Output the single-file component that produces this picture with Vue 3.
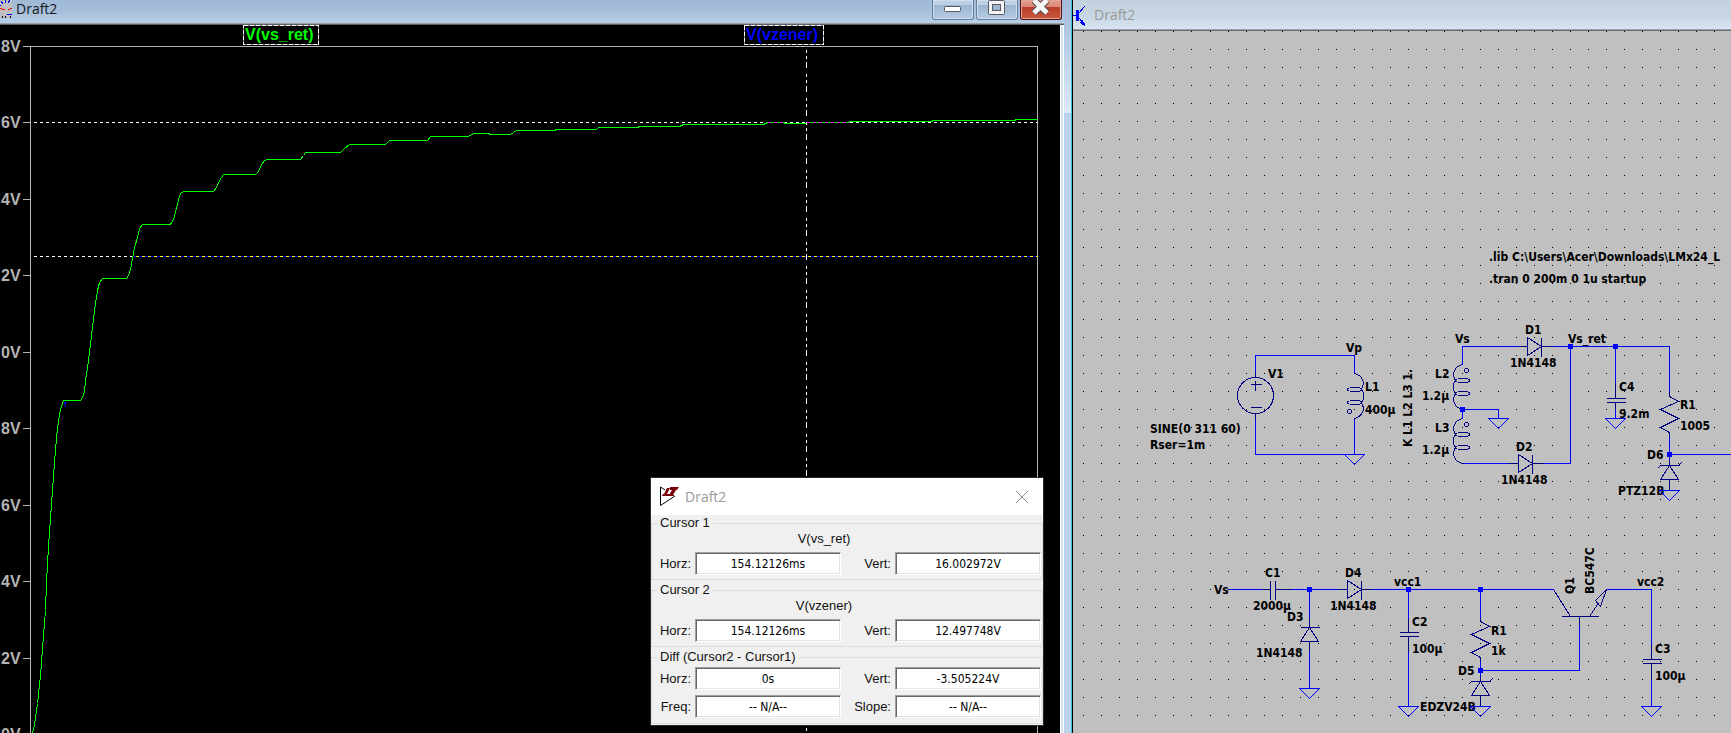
<script setup>
import { ref } from 'vue'

const ticks = [
  { y: 46, t: '8V' }, { y: 122, t: '6V' }, { y: 199, t: '4V' }, { y: 275, t: '2V' }, { y: 352, t: '0V' },
  { y: 428, t: '8V' }, { y: 505, t: '6V' }, { y: 581, t: '4V' }, { y: 658, t: '2V' }, { y: 734, t: '0V' },
]

const trace =
  '32,733 34,724 37,703 40,675 43,635 45,610 46,582 48,546 50,518 52,490 54,462 56,437 58,420 60,409 63,400 ' +
  '80,400 82,397 84,391 85,380 87,367 89,352 91,335 93,318 95,303 97,290 99,282 102,278 126,278 128,275 130,269 ' +
  '132,258 134,247 137,237 139,228 142,224 170,224 173,219 176,208 178,199 180,193 183,191 213,191 216,187 219,180 ' +
  '223,174 255,174 258,171 261,164 264,160 267,159 300,159 303,155 305,152 340,152 344,148 349,144 385,144 389,140 ' +
  '427,140 430,136 468,136 473,133 489,133 489,134 510,134 516,130 555,130 555,129 596,129 598,127 638,127 638,126 ' +
  '679,126 683,124 763,124 767,122 784,122 784,123 806,123 806,122 849,122 849,121 932,121 932,120 1015,120 1015,119 1037,119'

const groups = ref([
  { title: 'Cursor 1', signal: 'V(vs_ret)', rows: [[['Horz:', '154.12126ms'], ['Vert:', '16.002972V']]] },
  { title: 'Cursor 2', signal: 'V(vzener)', rows: [[['Horz:', '154.12126ms'], ['Vert:', '12.497748V']]] },
  {
    title: 'Diff (Cursor2 - Cursor1)', signal: '',
    rows: [[['Horz:', '0s'], ['Vert:', '-3.505224V']], [['Freq:', '-- N/A--'], ['Slope:', '-- N/A--']]],
  },
])

const wires = [
  'M1255 372V355H1354V373', 'M1255 418V454H1354V418',
  'M1462 364V346H1518', 'M1552 346H1669V391', 'M1570 346V463H1543', 'M1462 463H1508',
  'M1462 418V409H1498V418', 'M1615 346V382', 'M1615 409V418', 'M1669 436V459', 'M1669 454H1731',
  'M1228 589H1261', 'M1291 589H1337', 'M1372 589H1553', 'M1309 589V617', 'M1309 651V688',
  'M1408 589V618', 'M1408 651V706', 'M1480 589V617', 'M1480 661V675', 'M1480 670H1579V625',
  'M1606 589H1651V644', 'M1651 679V706',
]
const pins = [
  'M1255 372V377', 'M1255 413V418', 'M1250 384H1261', 'M1255 380V390', 'M1250 407H1261',
  'M1518 346H1527', 'M1541 346H1552', 'M1508 463H1518', 'M1532 463H1543',
  'M1615 382V398', 'M1606 398H1625', 'M1606 402H1625', 'M1615 402V409',
  'M1669 391V396L1678 401L1660 409L1678 418L1660 427L1669 432V436',
  'M1669 459V465', 'M1669 479V490',
  'M1261 589H1270', 'M1270 580V599', 'M1275 580V599', 'M1275 589H1291',
  'M1337 589H1347', 'M1361 589H1372', 'M1309 617V627', 'M1309 641V651',
  'M1408 618V632', 'M1399 632H1418', 'M1399 636H1418', 'M1408 636V651',
  'M1480 617V621L1489 626L1471 634L1489 643L1471 652L1480 657V661',
  'M1480 675V681', 'M1480 695V706',
  'M1579 625V616', 'M1561 616H1598', 'M1553 589L1570 616', 'M1589 616L1597 604', 'M1606 589L1595 600L1600 606Z',
  'M1651 644V659', 'M1642 659H1661', 'M1642 663H1661', 'M1651 663V679',
]
const grounds = [[1354, 454], [1498, 418], [1615, 418], [1669, 490], [1309, 688], [1408, 706], [1480, 706], [1651, 706]]
const joints = [[1570, 346], [1615, 346], [1462, 409], [1669, 454], [1309, 589], [1408, 589], [1480, 589], [1480, 670]]
const diodes = [[1527, 346], [1518, 463], [1347, 589]]
const upDiodes = [{ x: 1309, y: 627 }, { x: 1669, y: 465, zener: true }, { x: 1480, y: 681, zener: true }]
const coils = [
  { x: 1354, y: 373, side: 1, dx: 1349, dy: 411 },
  { x: 1462, y: 364, side: -1, dx: 1466, dy: 370 },
  { x: 1462, y: 418, side: -1, dx: 1466, dy: 424 },
]
const labels = [
  [1489, 261, '.lib C:\\Users\\Acer\\Downloads\\LMx24_L'], [1489, 283, '.tran 0 200m 0 1u startup'],
  [1346, 352, 'Vp'], [1268, 378, 'V1'], [1365, 391, 'L1'], [1365, 414, '400µ'],
  [1150, 433, 'SINE(0 311 60)'], [1150, 449, 'Rser=1m'],
  [1435, 378, 'L2'], [1422, 400, '1.2µ'], [1435, 432, 'L3'], [1422, 454, '1.2µ'],
  [1455, 343, 'Vs'], [1525, 334, 'D1'], [1510, 367, '1N4148'], [1568, 343, 'Vs_ret'],
  [1619, 391, 'C4'], [1619, 418, '9.2m'], [1680, 409, 'R1'], [1680, 430, '1005'],
  [1516, 451, 'D2'], [1501, 484, '1N4148'], [1647, 459, 'D6'], [1618, 495, 'PTZ12B'],
  [1265, 577, 'C1'], [1253, 610, '2000µ'], [1345, 577, 'D4'], [1330, 610, '1N4148'],
  [1287, 621, 'D3'], [1256, 657, '1N4148'], [1214, 594, 'Vs'], [1394, 586, 'vcc1'],
  [1412, 626, 'C2'], [1412, 653, '100µ'], [1491, 635, 'R1'], [1491, 655, '1k'],
  [1458, 675, 'D5'], [1420, 711, 'EDZV24B'], [1637, 586, 'vcc2'], [1655, 653, 'C3'], [1655, 680, '100µ'],
]
const upright = [[1412, 447, 'K L1 L2 L3 1.'], [1574, 594, 'Q1'], [1594, 594, 'BC547C']]
</script>

<template>
  <main class="desk">
    <section class="wave">
      <div class="wave-main">
        <header class="bar">
          <svg class="wave-icon" width="12" height="18" viewBox="0 0 12 18" shape-rendering="crispEdges">
            <path fill="#c0c0c0" d="M0 0H12V18H0Z" />
            <path fill="none" stroke="#00f" d="M1 1l2 3M5 0l1 3M10 0l-2 3M0 5l1 1M7 14.500h5" />
            <path fill="none" stroke="#e00" d="M0 8.500h2M2 9.500h3M8 9.500h2M10 8.500h2" />
            <path fill="none" stroke="#000" d="M2.500 16v2M5.500 16v2M10.500 16v2" />
          </svg>
          <h1 class="title">Draft2</h1>
          <div class="controls">
            <button type="button" class="ctl" aria-label="Minimize">
              <svg width="40" height="19" viewBox="0 0 40 19"><rect x="11.500" y="6.500" width="16" height="5" rx="1" fill="#fff" stroke="#555a66" /></svg>
            </button>
            <button type="button" class="ctl" aria-label="Maximize">
              <svg width="40" height="19" viewBox="0 0 40 19">
                <rect x="11.500" y="0.500" width="16" height="14" rx="1" fill="#f4f4f4" stroke="#555a66" />
                <rect x="15.500" y="4.500" width="8" height="6" fill="#9db6d2" stroke="#555a66" />
              </svg>
            </button>
            <button type="button" class="ctl close" aria-label="Close">
              <svg width="40" height="19" viewBox="0 0 40 19">
                <path d="M13 0L26 13M26 0L13 13" stroke="#51444f" stroke-width="7" />
                <path d="M13 0L26 13M26 0L13 13" stroke="#f6f6f6" stroke-width="5" />
              </svg>
            </button>
          </div>
        </header>
        <div class="plot">
          <svg class="canvas" viewBox="0 25 1060 708" preserveAspectRatio="xMinYMin slice">
            <g shape-rendering="crispEdges" fill="none" transform="translate(0.5 0.5)">
              <path stroke="#b4b4b4" d="M30 733V46H1037V733" />
              <path v-for="k in ticks" :key="k.y" stroke="#b4b4b4" :d="`M22 ${k.y}H30`" />
              <path stroke="#fff" stroke-dasharray="3 3" d="M33 122H1037M33 256H133" />
              <path stroke="#00f" d="M133 256H1037M64 401V403M65 401V406" />
              <path stroke="#ff0" stroke-dasharray="3 3" d="M135 256H1037" />
              <polyline stroke="#0f0" :points="trace" />
              <path stroke="#f0f" stroke-dasharray="3 3" d="M767 122H784M806 122H849" />
              <path stroke="#fff" stroke-dasharray="3 3 3 3 6 6" d="M806 49V733" />
              <path stroke="#808080" d="M243 25H318V44H243ZM744 25H823V44H744Z" />
              <path stroke="#fff" stroke-dasharray="4 2" d="M243 25H318V44H243ZM744 25H823V44H744Z" />
            </g>
            <g class="plot-text">
              <text v-for="k in ticks" :key="k.y" x="1" :y="k.y + 6" fill="#b4b4b4">{{ k.t }}</text>
              <text x="245" y="40" fill="#0f0">V(vs_ret)</text>
              <text x="746" y="40" fill="#00f">V(vzener)</text>
            </g>
          </svg>

          <form class="dialog" @submit.prevent>
            <header class="dialog-bar">
              <svg width="21" height="21" viewBox="0 0 21 21">
                <path fill="none" stroke="#000" d="M1.500 1V19.500L16 10M1.500 1L6 4" />
                <path fill="#7c0008" d="M8 2H11L8 8H11L10 10H3L4 8H5Z" />
                <path fill="#7c0008" d="M11 1H20L18 4H17L14 9H15V10H10V9L13 4H11Z" />
              </svg>
              <h2 class="title dim">Draft2</h2>
              <button type="button" class="dismiss" aria-label="Close">
                <svg width="12" height="12" viewBox="0 0 12 12"><path stroke="#8c8c8c" d="M0 0L12 12M12 0L0 12" /></svg>
              </button>
            </header>
            <fieldset v-for="(g, gi) in groups" :key="g.title" class="group">
              <legend>{{ g.title }}</legend>
              <p v-if="g.signal" class="signal">{{ g.signal }}</p>
              <div v-for="(row, ri) in g.rows" :key="ri" class="row">
                <template v-for="(cell, ci) in row" :key="ci">
                  <label :for="`f${gi}${ri}${ci}`">{{ cell[0] }}</label>
                  <input :id="`f${gi}${ri}${ci}`" v-model="cell[1]" type="text" />
                </template>
              </div>
            </fieldset>
          </form>
        </div>
      </div>
      <div class="edge"></div>
    </section>

    <section class="schematic">
      <header class="bar pale">
        <svg width="16" height="26" viewBox="0 0 16 26" shape-rendering="crispEdges">
          <path fill="#00f" d="M3 8H6V19H3Z" />
          <path fill="none" stroke="#00f" d="M0 13.500H3M6 11L12 4M6 16L12 23" />
          <path fill="#00f" d="M9 17L12 22V24L7 21Z" />
        </svg>
        <h1 class="title dim">Draft2</h1>
      </header>
      <svg class="canvas" viewBox="1073 31 658 702" preserveAspectRatio="xMinYMin slice">
        <defs>
          <pattern id="dots-a" x="1083" y="31" width="18" height="18" patternUnits="userSpaceOnUse">
            <rect width="1" height="1" fill="#000" />
          </pattern>
          <pattern id="dots-b" x="1210" y="31" width="18" height="18" patternUnits="userSpaceOnUse">
            <rect width="1" height="1" fill="#000" />
          </pattern>
        </defs>
        <rect x="1073" y="31" width="127" height="702" fill="url(#dots-a)" />
        <rect x="1200" y="31" width="531" height="702" fill="url(#dots-b)" />
        <g class="sheet-text">
          <text v-for="l in labels" :key="`${l[0]}-${l[1]}`" :x="l[0]" :y="l[1]">{{ l[2] }}</text>
          <text v-for="l in upright" :key="l[2]" :transform="`translate(${l[0]} ${l[1]}) rotate(-90)`">{{ l[2] }}</text>
        </g>
        <g fill="none" shape-rendering="crispEdges" transform="translate(0.5 0.5)">
          <g stroke="#000080">
            <path v-for="p in pins" :key="p" :d="p" />
            <circle cx="1255" cy="395" r="18" />
            <path v-for="d in diodes" :key="d[0]" :d="`M${d[0]} ${d[1] - 9}V${d[1] + 9}L${d[0] + 14} ${d[1]}ZM${d[0] + 14} ${d[1] - 9}v19`" />
            <g v-for="d in upDiodes" :key="d.x">
              <path :d="`M${d.x - 9} ${d.y + 14}H${d.x + 9}L${d.x} ${d.y}ZM${d.x - 9} ${d.y}h19`" />
              <path v-if="d.zener" :d="`M${d.x - 9} ${d.y}l-3 3M${d.x + 9} ${d.y}l3 -3`" />
            </g>
            <g v-for="c in coils" :key="c.y">
              <g :transform="`translate(${c.x} ${c.y}) scale(${c.side} 1)`">
                <path d="M0 0C8 2 11 9 7 16C10 20 10 25 7 29C11 36 8 43 0 45" />
                <ellipse cx="0" cy="16" rx="7" ry="2" />
                <ellipse cx="0" cy="29" rx="7" ry="2" />
              </g>
              <circle :cx="c.dx" :cy="c.dy" r="2" />
            </g>
          </g>
          <g stroke="#0000ff">
            <path v-for="w in wires" :key="w" :d="w" />
            <path v-for="g in grounds" :key="g[0]" :d="`M${g[0] - 10} ${g[1]}h20l-10 10Z`" />
          </g>
        </g>
        <rect v-for="j in joints" :key="`${j[0]}-${j[1]}`" :x="j[0] - 2" :y="j[1] - 2" width="5" height="5" fill="#00f" />
      </svg>
    </section>
  </main>
</template>

<style>
body {
  margin: 0;
  overflow: hidden;
}
</style>

<style scoped>
.desk {
  display: grid;
  grid-template-columns: 1073fr 658fr;
  height: 100vh;
  overflow: hidden;
  font-family: "Liberation Sans", Arial, sans-serif;
}
.wave {
  display: flex;
  min-width: 0;
  background: #b9d1ea;
}
.wave-main {
  flex: 1;
  min-width: 0;
  display: flex;
  flex-direction: column;
}
.edge {
  box-sizing: border-box;
  width: 9px;
  border-right: 1px solid #000;
  box-shadow: inset -1px 0 #35c4dd;
  background: linear-gradient(#a2bbd7 0, #b4cbe5 40px, #dce9f6 113px, #b9d1ea 113px);
}
.bar {
  box-sizing: border-box;
  display: flex;
  align-items: flex-start;
  height: 25px;
  border-bottom: 1px solid #5e6266;
  box-shadow: inset 0 -1px #9a9fa5;
  background: linear-gradient(#a0b9d5, #a4bdd8 40%, #b9d1ea);
}
.bar.pale {
  height: 31px;
  align-items: center;
  border-color: #6b6b6b;
  background: linear-gradient(#c3d0de, #c8d5e3 50%, #d8e5f3);
}
.title {
  margin: 0;
  padding-left: 4px;
  font: 400 14px/18px "Open Sans", "Noto Sans", sans-serif;
  color: #16181c;
}
.dim {
  padding-left: 5px;
  color: #999;
}
.controls {
  display: flex;
  gap: 2px;
  margin: 0 2px 0 auto;
}
.ctl {
  box-sizing: border-box;
  width: 42px;
  height: 20px;
  padding: 0;
  border: 1px solid #667d9b;
  border-top: 0;
  border-radius: 0 0 3px 3px;
  box-shadow: inset 0 0 0 1px #cfdeee;
  background: linear-gradient(#bdd0e5 0, #bccfe4 5px, #9bb4cf 5px, #b7cde5 20px);
}
.ctl svg {
  display: block;
}
.ctl.close {
  border-color: #4e0d18;
  box-shadow: inset 0 0 0 1px #e0a394;
  background: linear-gradient(#e3a090 0, #d98674 7px, #b93c26 7px, #cd5c41 20px);
}
.plot {
  position: relative;
  flex: 1;
  min-height: 0;
  background: #000;
  border-right: 1px solid #fff;
  margin-right: 3px;
  box-shadow: 2px 0 #d6e4f2, 3px 0 #fff;
}
.canvas {
  display: block;
  width: 100%;
  height: 100%;
}
.plot-text {
  font: 700 16px "Liberation Sans", Arial, sans-serif;
}
.dialog {
  position: absolute;
  right: 17px;
  bottom: 8px;
  width: 392px;
  background: #f0f0f0;
  outline: 1px solid #2b2b2b;
  color: #111;
  font-size: 13px;
  line-height: 16px;
}
.dialog-bar {
  display: flex;
  align-items: center;
  height: 37px;
  padding: 0 15px 0 8px;
  background: #fff;
}
.dismiss {
  margin-left: auto;
  padding: 0;
  border: 0;
  background: none;
}
.dismiss svg {
  display: block;
}
.group {
  min-width: 0;
  margin: 0 0 2px;
  padding: 0 1px 4px 0;
  border: 1px solid #dcdcdc;
}
.group:last-child {
  margin-bottom: 1px;
  padding-bottom: 5px;
}
.group legend {
  margin-left: 5px;
  padding: 0 3px;
}
.signal {
  margin: 0 45px 5px 0;
  text-align: center;
}
.row {
  display: grid;
  grid-template-columns: 43px 1fr 54px 1fr;
  align-items: center;
}
.row + .row {
  margin-top: 5px;
}
.group legend + .row {
  margin-top: 2px;
}
.row label {
  padding-right: 4px;
  text-align: right;
}
.row input {
  box-sizing: border-box;
  min-width: 0;
  width: 100%;
  height: 23px;
  padding: 1px 0 0;
  border: 1px solid;
  border-color: #a0a0a0 #fff #fff #a0a0a0;
  box-shadow: inset 1px 1px #696969, inset -1px -1px #e3e3e3;
  background: #fff;
  color: #000;
  font: 12px "DejaVu Sans Condensed", "DejaVu Sans", sans-serif;
  text-align: center;
}
.schematic {
  display: flex;
  flex-direction: column;
  min-width: 0;
  background: #c0c0c0;
}
.schematic .canvas {
  flex: 1;
  min-height: 0;
}
.sheet-text {
  font: 700 12px "DejaVu Sans Condensed", "DejaVu Sans", sans-serif;
}
</style>
